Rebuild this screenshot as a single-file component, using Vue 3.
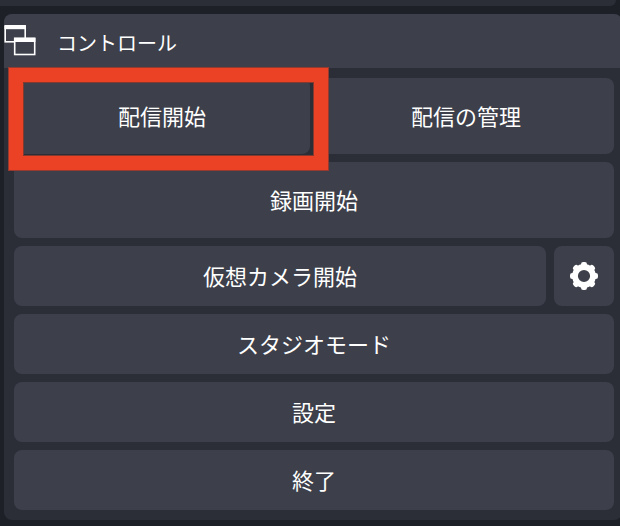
<script setup>
const teeth = [0, 45, 90, 135, 180, 225, 270, 315]
</script>

<template>
  <div class="screen">
    <div class="upper-dock"></div>
    <section class="dock">
      <header class="dock-title">
        <svg class="windows-icon" width="32" height="32" viewBox="0 0 32 32">
          <rect x="1.2" y="2.5" width="20" height="15.3" />
          <rect class="bar" x="0.5" y="1" width="21.4" height="4.2" />
          <rect x="10.7" y="14.5" width="20" height="16" />
          <rect class="bar" x="10" y="13.6" width="21.4" height="4.4" />
        </svg>
        <h1>コントロール</h1>
      </header>
      <div class="controls">
        <div class="row tall">
          <button>配信開始</button>
          <button>配信の管理</button>
        </div>
        <div class="row tall"><button>録画開始</button></div>
        <div class="row">
          <button>仮想カメラ開始</button>
          <button class="gear" aria-label="設定">
            <svg width="28" height="28" viewBox="-14 -14 28 28">
              <circle r="9" fill="none" stroke="#fff" stroke-width="5.8" />
              <rect
                v-for="angle in teeth"
                :key="angle"
                x="-3"
                y="-14"
                width="6"
                height="6"
                rx="2.2"
                fill="#fff"
                :transform="`rotate(${angle})`"
              />
            </svg>
          </button>
        </div>
        <div class="row"><button>スタジオモード</button></div>
        <div class="row"><button>設定</button></div>
        <div class="row"><button>終了</button></div>
      </div>
    </section>
    <div class="highlight"></div>
  </div>
</template>

<style>
body {
  background: #1e2028;
}
</style>

<style scoped>
.screen {
  position: relative;
  width: 620px;
  height: 526px;
  overflow: hidden;
  background: #1e2028;
  color: #fff;
  font-family: "Noto Sans CJK JP", sans-serif;
}
.upper-dock {
  height: 6px;
  margin: 0 4px 8px 0;
  background: #2b2d37;
  border-bottom-right-radius: 8px;
}
.dock {
  width: 618px;
  height: 506px;
  margin-left: 4px;
  background: #2b2d37;
  border-radius: 8px;
  overflow: hidden;
}
.dock-title {
  display: flex;
  align-items: center;
  height: 54px;
  background: #3d3f4a;
}
.windows-icon {
  flex: none;
  margin-right: 21px;
  margin-bottom: 2px;
  fill: #3d3f4a;
  stroke: #fff;
  stroke-width: 1.6;
}
.windows-icon .bar {
  fill: #fff;
  stroke: none;
}
h1 {
  margin: 0;
  padding-top: 3px;
  font-size: 20px;
  font-weight: 400;
  line-height: 30px;
}
.controls {
  display: flex;
  flex-direction: column;
  gap: 8px;
  width: 600px;
  padding: 10px;
}
.row {
  display: flex;
  gap: 8px;
  height: 60px;
}
.row.tall {
  height: 76px;
}
button {
  display: flex;
  flex: 1 1 0;
  align-items: center;
  justify-content: center;
  margin: 0;
  padding: 0 0 3px;
  border: 0;
  border-radius: 8px;
  background: #3d3f4a;
  color: #fff;
  font: inherit;
  font-size: 22px;
}
button.gear {
  flex: 0 0 60px;
  padding: 0;
}
.highlight {
  position: absolute;
  left: 8px;
  top: 67px;
  box-sizing: border-box;
  width: 321px;
  height: 104px;
  border: 15px solid #eb4226;
  outline: 1px solid #96392f;
  outline-offset: -1px;
  box-shadow: inset 0 0 0 1px #84392f;
}
</style>
